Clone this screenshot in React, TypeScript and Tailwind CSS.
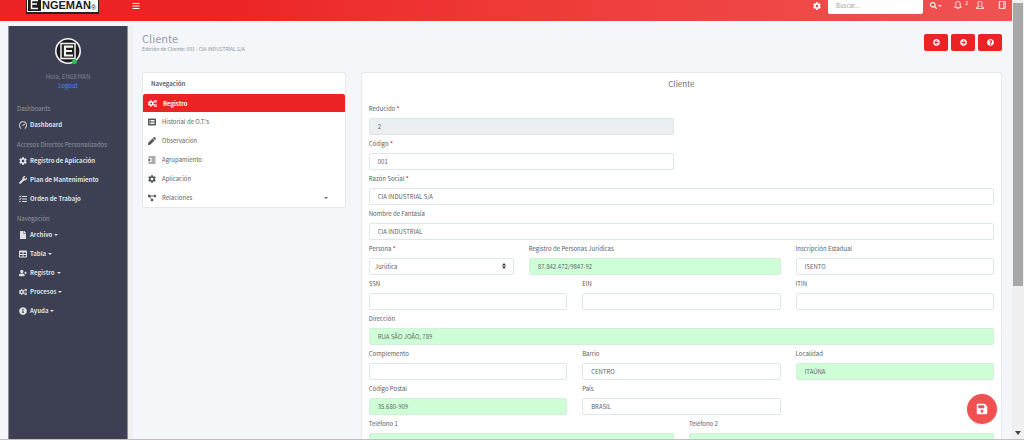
import type { ReactNode } from "react";
import {
  FaArrowCircleLeft,
  FaArrowCircleRight,
  FaBars,
  FaCog,
  FaCogs,
  FaFile,
  FaIndent,
  FaInfoCircle,
  FaListAlt,
  FaPen,
  FaProjectDiagram,
  FaQuestionCircle,
  FaSave,
  FaSearch,
  FaTable,
  FaTasks,
  FaUserPlus,
  FaWrench,
} from "react-icons/fa";
import { SlBell, SlNotebook, SlSpeedometer, SlUser } from "react-icons/sl";

interface MenuItem {
  label: string;
  icon: ReactNode;
  caret?: boolean;
}

interface MenuGroup {
  title: string;
  items: MenuItem[];
}

interface Field {
  id: string;
  label: string;
  value: string;
  span: string;
  required?: boolean;
  tone?: "green" | "disabled";
  options?: string[];
}

const MENU: MenuGroup[] = [
  {
    title: "Dashboards",
    items: [{ label: "Dashboard", icon: <SlSpeedometer strokeWidth={40} stroke="currentColor" /> }],
  },
  {
    title: "Accesos Directos Personalizados",
    items: [
      { label: "Registro de Aplicación", icon: <FaCog /> },
      { label: "Plan de Mantenimiento", icon: <FaWrench /> },
      { label: "Orden de Trabajo", icon: <FaTasks /> },
    ],
  },
  {
    title: "Navegación",
    items: [
      { label: "Archivo", icon: <FaFile />, caret: true },
      { label: "Tabla", icon: <FaTable />, caret: true },
      { label: "Registro", icon: <FaUserPlus />, caret: true },
      { label: "Procesos", icon: <FaCogs />, caret: true },
      { label: "Ayuda", icon: <FaInfoCircle />, caret: true },
    ],
  },
];

const TABS: MenuItem[] = [
  { label: "Historial de O.T.'s", icon: <FaListAlt /> },
  { label: "Observación", icon: <FaPen /> },
  { label: "Agrupamiento", icon: <FaIndent /> },
  { label: "Aplicación", icon: <FaCog /> },
  { label: "Relaciones", icon: <FaProjectDiagram />, caret: true },
];

const FULL = "col-span-12";
const HALF = "col-span-6";
const THIRD = "col-span-4";
const HALF_ROW = "col-start-1 col-span-6";

const FIELDS: Field[] = [
  { id: "reducido", label: "Reducido", value: "2", span: HALF_ROW, required: true, tone: "disabled" },
  { id: "codigo", label: "Código", value: "001", span: HALF_ROW, required: true },
  { id: "razon", label: "Razón Social", value: "CIA INDUSTRIAL S/A", span: FULL, required: true },
  { id: "fantasia", label: "Nombre de Fantasía", value: "CIA INDUSTRIAL", span: FULL },
  { id: "persona", label: "Persona", value: "Jurídica", span: "col-span-3", required: true, options: ["Jurídica", "Física"] },
  { id: "rpj", label: "Registro de Personas Jurídicas", value: "87.842.472/9847-92", span: "col-span-5", tone: "green" },
  { id: "inscripcion", label: "Inscripción Estadual", value: "ISENTO", span: THIRD },
  { id: "ssn", label: "SSN", value: "", span: THIRD },
  { id: "ein", label: "EIN", value: "", span: THIRD },
  { id: "itin", label: "ITIN", value: "", span: THIRD },
  { id: "direccion", label: "Dirección", value: "RUA SÃO JOÃO, 789", span: FULL, tone: "green" },
  { id: "complemento", label: "Complemento", value: "", span: THIRD },
  { id: "barrio", label: "Barrio", value: "CENTRO", span: THIRD },
  { id: "localidad", label: "Localidad", value: "ITAÚNA", span: THIRD, tone: "green" },
  { id: "postal", label: "Código Postal", value: "35.680-909", span: THIRD, tone: "green" },
  { id: "pais", label: "País", value: "BRASIL", span: THIRD },
  { id: "tel1", label: "Teléfono 1", value: "", span: HALF_ROW, tone: "green" },
  { id: "tel2", label: "Teléfono 2", value: "", span: HALF, tone: "green" },
];

function Caret() {
  return (
    <svg viewBox="0 0 4 2" className="w-1 h-0.5 shrink-0" fill="currentColor">
      <path d="M0 0h4L2 2z" />
    </svg>
  );
}

function Logo() {
  return (
    <a
      href="#inicio"
      aria-label="Engeman"
      className="flex h-3.5 w-[73px] items-end border-x border-b-2 border-[#2a2020] bg-white pb-px"
    >
      <svg viewBox="0 0 13 11" className="ml-px h-[11px] w-[13px] shrink-0">
        <rect width="13" height="11" fill="#1c1c1c" />
        <path d="M3.5 0v8.5h6.5M3.5 4h5.5M3.5 .5h6.5" fill="none" stroke="#fff" strokeWidth="1.5" />
      </svg>
      <span className="ml-px font-['Liberation_Sans'] text-[11px] font-bold leading-[11px] text-[#1c1c1c]">
        NGEMAN
      </span>
      <span className="font-['Liberation_Sans'] text-[7px] leading-[6px] text-[#1c1c1c]">®</span>
    </a>
  );
}

function Avatar() {
  return (
    <div className="relative size-[26px]">
      <svg viewBox="0 0 26 26" className="size-[26px]">
        <circle cx="13" cy="13" r="12.2" fill="#1d1d1d" stroke="#f4f4f4" strokeWidth="1.6" />
        <path d="M6 5.5h14v15H6z" fill="#1d1d1d" stroke="#f4f4f4" strokeWidth="1.5" />
        <path d="M18 8.7H10v8.8h8M10 13h7" fill="none" stroke="#f4f4f4" strokeWidth="2.2" />
      </svg>
      <span className="absolute bottom-0 right-1 size-[5px] rounded-full bg-[#27c24c]" />
    </div>
  );
}

function Header() {
  return (
    <header className="flex h-[21px] shrink-0 items-start bg-linear-to-r from-[#ed2224] from-20% to-[#f05252] pl-[26px] pr-1.5 text-white">
      <Logo />
      <button type="button" aria-label="Menú" className="ml-[33px] mt-0.5">
        <FaBars className="size-2" />
      </button>
      <button type="button" aria-label="Configuración" className="ml-auto mt-0.5">
        <FaCog className="size-2" />
      </button>
      <input
        type="text"
        aria-label="Buscar"
        placeholder="Buscar..."
        className="ml-[7px] h-3.5 w-[95px] rounded-b-xs bg-white px-2 pb-1 text-[6px] text-gray-600 outline-none placeholder:text-[#a4a4a4]"
      />
      <button type="button" aria-label="Opciones de búsqueda" className="ml-[7px] mt-0.5 flex items-center gap-px">
        <FaSearch className="size-[7px]" />
        <Caret />
      </button>
      <button type="button" aria-label="Notificaciones" className="relative ml-3 mt-px">
        <SlBell className="size-2" strokeWidth={30} stroke="currentColor" />
        <span className="absolute -right-1.5 -top-px text-[5px] leading-[5px]">2</span>
      </button>
      <button type="button" aria-label="Usuario" className="ml-3.5 mt-px">
        <SlUser className="size-2" strokeWidth={30} stroke="currentColor" />
      </button>
      <button type="button" aria-label="Notas" className="ml-3.5 mt-px">
        <SlNotebook className="size-2" strokeWidth={30} stroke="currentColor" />
      </button>
    </header>
  );
}

function Sidebar() {
  return (
    <aside className="w-[120px] shrink-0 border-x border-[#8b8e9b] bg-[#3d4052] text-[6px]">
      <div className="flex flex-col items-center pt-3">
        <Avatar />
        <span className="mt-2 leading-[9px] text-[#7a8192]">Hola, ENGEMAN</span>
        <a href="#logout" className="leading-[9px] text-[#4a8af4]">
          Logout
        </a>
      </div>
      <nav className="mt-2 pl-2">
        {MENU.map((group) => (
          <div key={group.title}>
            <h2 className="h-[17px] pt-1.5 leading-[10px] text-[#8f96a4]">{group.title}</h2>
            <ul>
              {group.items.map((item) => (
                <li key={item.label}>
                  <a href="#menu" className="flex h-[19px] items-center font-bold text-[#dfe1e6]">
                    <span className="flex w-[13px] shrink-0 pl-0.5 text-[8px]">{item.icon}</span>
                    <span className="mr-0.5">{item.label}</span>
                    {item.caret && <Caret />}
                  </a>
                </li>
              ))}
            </ul>
          </div>
        ))}
      </nav>
    </aside>
  );
}

function Tabs() {
  return (
    <nav className="col-span-3 self-start rounded-xs border border-[#e6e9ec] bg-white text-[6px] text-[#5f6369]">
      <h2 className="h-[21px] pl-2 font-bold leading-[21px] text-[#666]">Navegación</h2>
      <a href="#registro" className="flex h-[18px] items-center rounded-t-xs bg-[#ed2224] pl-[5px] font-bold text-white">
        <span className="w-[15px] shrink-0 text-[9px]">
          <FaCogs />
        </span>
        Registro
      </a>
      {TABS.map((tab) => (
        <a key={tab.label} href="#tab" className="flex h-[19px] items-center pl-[5px]">
          <span className="w-3.5 shrink-0 text-[8px] text-[#55585e]">{tab.icon}</span>
          <span>{tab.label}</span>
          {tab.caret && (
            <span className="ml-auto mr-[17px]">
              <Caret />
            </span>
          )}
        </a>
      ))}
    </nav>
  );
}

function FormField({ field }: { field: Field }) {
  const tone =
    field.tone === "green"
      ? "bg-[#cfffd6] border-[#d3efdc]"
      : field.tone === "disabled"
        ? "bg-[#ebeff1] border-[#dde5e9]"
        : "bg-white border-[#dfe7ea]";
  return (
    <div className={`${field.span} flex flex-col`}>
      <label htmlFor={field.id} className="h-[18px] text-[6px] leading-[18px] text-[#5c5f64]">
        {field.label}
        {field.required && <span className="font-bold text-[#f03a3c]"> *</span>}
      </label>
      {field.options ? (
        <div className="relative">
          <select
            id={field.id}
            defaultValue={field.value}
            className={`${tone} block h-[17px] w-full appearance-none rounded-xs border px-[5px] text-[6px] text-[#5f6369]`}
          >
            {field.options.map((o) => (
              <option key={o}>{o}</option>
            ))}
          </select>
          <svg viewBox="0 0 4 6" className="pointer-events-none absolute right-2 top-[5px] h-1.5 w-1" fill="#343a40">
            <path d="M2 0 4 2.5H0zM2 6 0 3.5h4z" />
          </svg>
        </div>
      ) : (
        <input
          id={field.id}
          type="text"
          defaultValue={field.value}
          disabled={field.tone === "disabled"}
          className={`${tone} h-[17px] w-full rounded-xs border px-2 text-[6px] text-[#5f6369]`}
        />
      )}
    </div>
  );
}

function ActionButton({ label, children }: { label: string; children: ReactNode }) {
  return (
    <button
      type="button"
      aria-label={label}
      className="flex h-[17px] w-6 items-center justify-center rounded-xs bg-[#ed2224] text-[7px] text-white"
    >
      {children}
    </button>
  );
}

function PageTitle() {
  return (
    <div className="flex h-[46px] items-start justify-between">
      <div className="pt-[5px]">
        <h1 className="text-[11px] leading-[14px] text-[#98a0a6]">Cliente</h1>
        <p className="text-[5px] leading-[8px] text-[#8a989f]">Edición de Cliente: 001 - CIA INDUSTRIAL S/A</p>
      </div>
      <div className="flex gap-[3px] pt-2">
        <ActionButton label="Anterior">
          <FaArrowCircleLeft />
        </ActionButton>
        <ActionButton label="Siguiente">
          <FaArrowCircleRight />
        </ActionButton>
        <ActionButton label="Ayuda">
          <FaQuestionCircle />
        </ActionButton>
      </div>
    </div>
  );
}

function ScrollTrack() {
  return (
    <div className="flex w-3 shrink-0 flex-col items-center bg-[#f0f0f0] pt-[3px]">
      <div className="h-[65%] w-2.5 bg-[#a8a8a8]" />
      <svg viewBox="0 0 6 4" className="mb-1 mt-auto h-1 w-1.5" fill="#444">
        <path d="M0 0h6L3 4z" />
      </svg>
    </div>
  );
}

export default function App() {
  return (
    <div className="flex h-screen overflow-hidden border-b border-[#c4bfc0] bg-[#f5f6fa] font-['Noto_Sans_CJK_JP','Noto_Sans',sans-serif]">
      <div className="flex min-w-0 flex-1 flex-col">
        <Header />
        <div className="flex min-h-0 flex-1 pl-2 pt-[5px]">
          <Sidebar />
          <div className="w-[5px] shrink-0 bg-[#f0f0f0]" />
          <main className="min-w-0 flex-1 pl-[9px] pr-2.5">
            <PageTitle />
            <div className="grid grid-cols-12 gap-x-[15px]">
              <Tabs />
              <section className="col-span-9 rounded-xs border border-[#e6e9ec] bg-white px-[7px] pb-4">
                <h2 className="h-[27px] text-center text-[8px] leading-[21px] text-[#6b6f76]">Cliente</h2>
                <form className="grid grid-cols-12 gap-x-[15px]">
                  {FIELDS.map((f) => (
                    <FormField key={f.id} field={f} />
                  ))}
                </form>
              </section>
            </div>
          </main>
        </div>
      </div>
      <ScrollTrack />
      <button
        type="button"
        aria-label="Guardar"
        className="fixed bottom-4 right-[27px] flex size-[30px] items-center justify-center rounded-full bg-[#f05050] text-white shadow"
      >
        <FaSave className="size-3" />
      </button>
    </div>
  );
}
